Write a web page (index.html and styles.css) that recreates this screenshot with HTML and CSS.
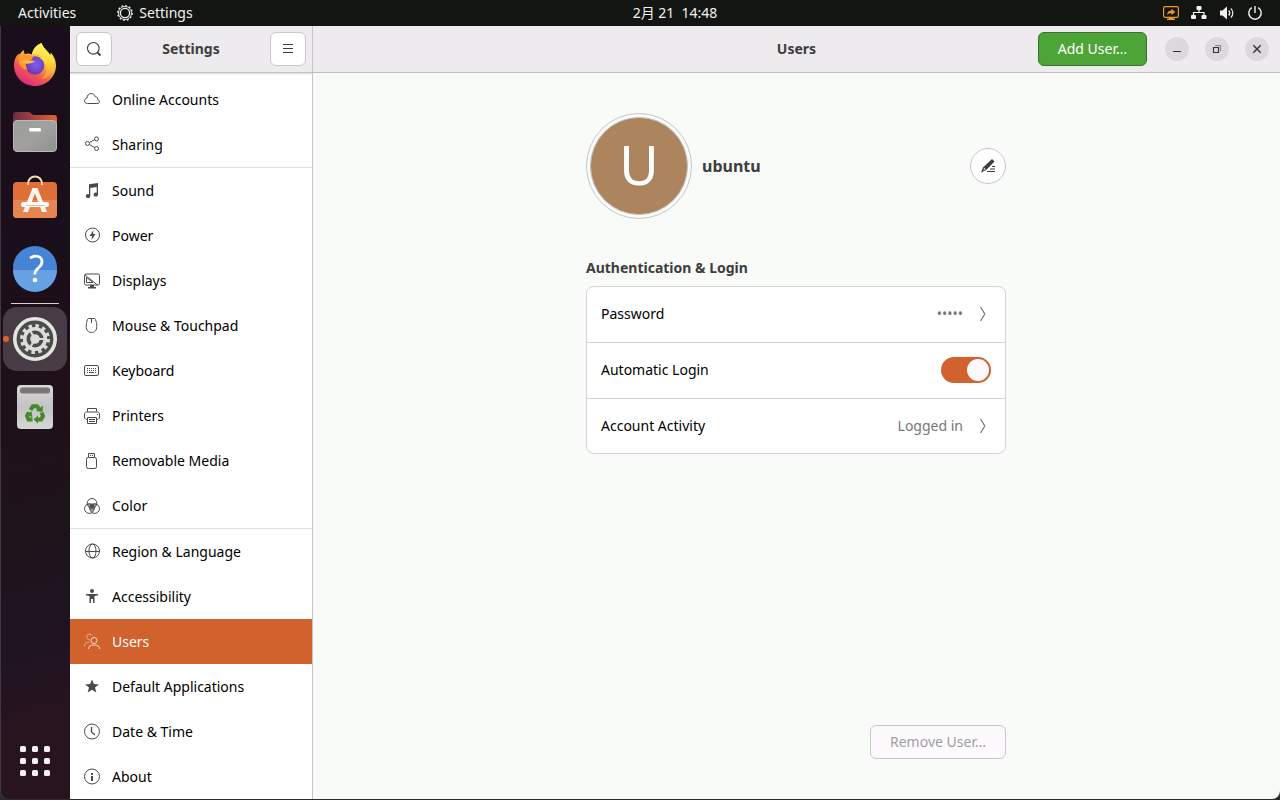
FILE: index.html
```html
<!DOCTYPE html>
<html lang="en">
<head>
<meta charset="utf-8">
<meta name="viewport" content="width=device-width, initial-scale=1">
<title>Settings</title>
<link rel="stylesheet" href="styles.css">
</head>
<body>
<div class="desktop">
  <header class="topbar">
    <div class="topbar-left">
      <button class="top-item" type="button">Activities</button>
      <button class="top-item" type="button">
        <svg class="icon" viewBox="0 0 16 16" aria-hidden="true"><circle cx="8" cy="8" r="7.300" fill="none" stroke="currentColor" stroke-width="1.200" stroke-dasharray="1.900 1.922"/><circle cx="8" cy="8" r="6.500" fill="none" stroke="currentColor" stroke-width=".9"/><circle cx="8" cy="8" r="4.600" fill="none" stroke="currentColor" stroke-width="1.300"/></svg>
        Settings
      </button>
    </div>
    <button class="top-item clock" type="button">2月 21&nbsp; 14:48</button>
    <div class="status">
      <svg class="icon share-screen" viewBox="0 0 16 16" aria-hidden="true"><rect x=".6" y="1.6" width="14.8" height="10.8" rx="1.6" fill="none" stroke="currentColor" stroke-width="1.2"/><path d="M6 12h4v1.5h2V15H4v-1.5h2z" fill="currentColor"/><path d="M4 10c.3-3 2-4.300 4.500-4.400V3.800L12.300 7 8.500 10.100V8.300C6.500 8.300 5 8.700 4 10z" fill="currentColor"/></svg>
      <svg class="icon" viewBox="0 0 16 16" aria-hidden="true"><rect x="5.500" y="1" width="5" height="4" rx="1" fill="currentColor"/><rect x="0" y="10" width="5" height="4" rx="1" fill="currentColor"/><rect x="10.500" y="10" width="5" height="4" rx="1" fill="currentColor"/><path d="M8 4v3.500M2.500 11V7.500H13V11" fill="none" stroke="currentColor" stroke-width="1.200"/></svg>
      <svg class="icon" viewBox="0 0 16 16" aria-hidden="true"><path d="M1 5.500h2.500L8 1.500v13L3.500 10.500H1z" fill="currentColor"/><path d="M9.700 5.500c1.300 1.500 1.300 3.500 0 5" fill="none" stroke="currentColor" stroke-width="1.300"/><path d="M11.800 3.300c2.700 2.700 2.700 6.700 0 9.400" fill="none" stroke="currentColor" stroke-width="1.200"/></svg>
      <svg class="icon" viewBox="0 0 16 16" aria-hidden="true"><path d="M8 1v7M4.800 2.700a6.200 6.200 0 1 0 6.400 0" fill="none" stroke="currentColor" stroke-width="1.400"/></svg>
    </div>
  </header>

  <div class="workspace">
    <nav class="dock" aria-label="Dock">
      <button class="app" type="button" aria-label="Firefox">
        <svg viewBox="0 0 44 44" aria-hidden="true">
          <defs>
            <linearGradient id="fox" x1=".8" y1=".1" x2=".3" y2="1"><stop offset="0" stop-color="#fff04e"/><stop offset=".4" stop-color="#ffac35"/><stop offset=".68" stop-color="#f65551"/><stop offset="1" stop-color="#d52a83"/></linearGradient>
            <radialGradient id="globe" cx=".55" cy=".45" r=".6"><stop offset="0" stop-color="#7c61ef"/><stop offset=".6" stop-color="#7646cb"/><stop offset="1" stop-color="#5b38a0"/></radialGradient>
            <linearGradient id="flame" x1="0" y1="0" x2="0" y2="1"><stop offset="0" stop-color="#fff267"/><stop offset=".5" stop-color="#ffdc3d"/><stop offset="1" stop-color="#ff963a"/></linearGradient>
          </defs>
          <path d="M28.500 1c1.500 5 6.500 8 9 12.500l.3-2.800C41 14 43 18.500 43 23.500 43 35 33.500 44 22 44S1 35 1 23.500C1 18 3 14 5.500 11.800l.3 2.400C7 11.500 8.700 9.500 10.500 8l1.200 4.200c2.800-.9 5-.8 7.300.2C20 7 23 3.500 28.500 1z" fill="url(#fox)"/>
          <circle cx="22" cy="23.500" r="9.300" fill="url(#globe)"/>
          <path d="M28.500 1c1.500 5 6.500 8 9 12.500l.3-2.800c3.500 5 4.800 12.800 1.200 19.300-2.500 4.600-6.800 7-11 6.800 6.500-4 7.500-11.300 2.500-17.800-1.400-2-3.400-3-3.400-3l3-.5c-3.300-3.300-7.600-4-11.100-3.100C20 7 23 3.500 28.500 1z" fill="url(#flame)"/>
          <path d="M5.500 12c3.500-.2 4.500 1.400 6.700 1.200 3.200-.3 5.800 0 7.800 2.300 0 1.800-5.300 4.700-8 5.500 1 2 .8 3 2.300 6.500C11 28 6 24 6.200 19.500z" fill="#ff9a30"/>
          <path d="M7.500 19.500c3-1.800 9.500-.5 14.300-.8-.5 1.900-4.800 2.800-7.800 3-2.500 0-4.500-1.700-6.500-2.200z" fill="#ffbd43"/>
        </svg>
      </button>
      <button class="app" type="button" aria-label="Files">
        <svg viewBox="0 0 44 44" aria-hidden="true">
          <defs><linearGradient id="folder"><stop stop-color="#6d294b"/><stop offset="1" stop-color="#e26132"/></linearGradient><linearGradient id="drawer" x2="1" y2="1"><stop stop-color="#9c9c9b"/><stop offset=".5" stop-color="#a1a1a0"/><stop offset="1" stop-color="#8f8f8e"/></linearGradient></defs>
          <path d="M0 5a3 3 0 0 1 3-3h13c2 0 2.500 3 5 3h20a3 3 0 0 1 3 3v10H0z" fill="url(#folder)"/>
          <rect x=".5" y="10.500" width="43" height="31" rx="3.500" fill="url(#drawer)" stroke="#b9b9b8"/>
          <rect x="16" y="18" width="12" height="3.500" rx="1.500" fill="#fff"/>
        </svg>
      </button>
      <button class="app" type="button" aria-label="Ubuntu Software">
        <svg viewBox="0 0 44 44" aria-hidden="true">
          <rect y="4" width="44" height="36" rx="4" fill="#df6e39"/><path d="M0 22h44v14a4 4 0 0 1-4 4H4a4 4 0 0 1-4-4z" fill="#e68552"/>
          <path d="M15 7V5.500a7 7 0 0 1 14 0V7" fill="none" stroke="#f4dda9" stroke-width="2"/>
          <path d="M19.500 10h5L34 34h-5L22 15.500 15 34h-5z" fill="#fff4ec"/><rect x="8" y="24" width="28" height="5" rx="2.500" fill="#fff"/><path d="M13 27.500h19" stroke="#f0b594" stroke-width="1"/>
        </svg>
      </button>
      <button class="app" type="button" aria-label="Help">
        <svg viewBox="0 0 44 44" aria-hidden="true"><circle cx="22" cy="22" r="22" fill="#4684d5"/><path d="M0 24h44a22 22 0 0 1-44 0z" fill="#66a2e3"/><path d="M17 12.200c6-4.200 12-1.500 12 3.600 0 6.400-7.200 5.500-7.200 12.700" fill="none" stroke="#fff" stroke-width="2.800"/><circle cx="22" cy="34" r="2.300" fill="#fff"/></svg>
      </button>
      <div class="dock-line"></div>
      <button class="app running" type="button" aria-label="Settings">
        <svg viewBox="0 0 44 44" aria-hidden="true">
          <circle cx="22" cy="22" r="20.200" fill="#4b4d49" stroke="#e4e4e3" stroke-width="3.600"/>
          <circle cx="22" cy="22" r="13" fill="none" stroke="#dcdcdb" stroke-width="4" stroke-dasharray="3.400 3.407"/>
          <circle cx="22" cy="22" r="10.300" fill="none" stroke="#dcdcdb" stroke-width="3.600"/>
          <path d="M22 22h11M22 22l-5.500-9.500M22 22l-5.500 9.500" stroke="#dcdcdb" stroke-width="2.200"/><circle cx="22" cy="22" r="4.800" fill="#dcdcdb"/>
        </svg>
      </button>
      <button class="app" type="button" aria-label="Trash">
        <svg viewBox="0 0 44 44" aria-hidden="true">
          <defs><linearGradient id="bin" x2="0" y2="1"><stop stop-color="#d7d7d7"/><stop offset=".5" stop-color="#c3c3c3"/><stop offset="1" stop-color="#d6d6d6"/></linearGradient></defs>
          <rect x="4" y="0" width="36" height="44" rx="4" fill="url(#bin)"/><rect x="7" y="2.500" width="30" height="6" rx="2.500" fill="#777577"/>
          <g fill="none" stroke="#45892d" stroke-width="4"><path d="M17.500 25l2.400-3.800h4.200l2.500 4"/><path d="M28.500 27.500l1.500 3.500-2 3.500h-4.500"/><path d="M19.500 34.500h-4L14 31l2-3.500"/></g>
          <g fill="#45892d"><path d="M23 26l6.500 1 .5-6.500z"/><path d="M25 30.500v8l-4.500-4z"/><path d="M12.500 28.500l6-2 1 6z"/></g>
        </svg>
      </button>
      <button class="app grid-button" type="button" aria-label="Show Applications">
        <svg viewBox="0 0 30 30" aria-hidden="true" fill="#f4f0f3"><rect width="6" height="6" rx="1.500"/><rect x="12" width="6" height="6" rx="1.500"/><rect x="24" width="6" height="6" rx="1.500"/><rect y="12" width="6" height="6" rx="1.500"/><rect x="12" y="12" width="6" height="6" rx="1.500"/><rect x="24" y="12" width="6" height="6" rx="1.500"/><rect y="24" width="6" height="6" rx="1.500"/><rect x="12" y="24" width="6" height="6" rx="1.500"/><rect x="24" y="24" width="6" height="6" rx="1.500"/></svg>
      </button>
    </nav>

    <div class="window">
      <aside class="sidebar">
        <div class="headerbar side-header">
          <button class="tool" type="button" aria-label="Search"><svg class="icon" viewBox="0 0 16 16" aria-hidden="true"><circle cx="7.300" cy="7.300" r="5.800" fill="none" stroke="currentColor" stroke-width="1.100"/><path d="M11.500 11.500l3 3" stroke="currentColor" stroke-width="1.800"/></svg></button>
          <h1 class="title">Settings</h1>
          <button class="tool" type="button" aria-label="Menu"><svg class="icon" viewBox="0 0 16 16" aria-hidden="true"><path d="M3 3.500h10M3 7.500h10M3 11.500h10" stroke="currentColor"/></svg></button>
        </div>
        <nav class="panels" aria-label="Settings panels">
          <div class="group">
            <a class="panel" href="#online"><svg class="icon" viewBox="0 0 16 16" aria-hidden="true"><path d="M3.500 11.500C1.500 11.500.5 10.300.5 8.800S1.600 6.300 3 6c0-2.600 1.700-4.500 4.200-4.500 2 0 3.500 1.200 4 3.200 2.300-.3 2.600 2 2.300 2.800 1.300.4 2 1 2 2s-.8 2-2.200 2z" fill="none" stroke="currentColor"/></svg>Online Accounts</a>
            <a class="panel" href="#sharing"><svg class="icon" viewBox="0 0 16 16" aria-hidden="true"><g fill="none" stroke="currentColor"><circle cx="3.500" cy="6.500" r="2"/><circle cx="12.500" cy="1.900" r="2"/><circle cx="12.500" cy="11.500" r="2"/><path d="M5.300 5.600l5.400-2.900M5.300 7.500l5.400 3"/></g></svg>Sharing</a>
          </div>
          <div class="group">
            <a class="panel" href="#sound"><svg class="icon" viewBox="0 0 16 16" aria-hidden="true"><path d="M5 1.200L14 0v11.500a2.200 2 0 1 1-1.300-1.700V4L6.300 5v8a2.200 2 0 1 1-1.300-1.700z" fill="currentColor"/></svg>Sound</a>
            <a class="panel" href="#power"><svg class="icon" viewBox="0 0 16 16" aria-hidden="true"><circle cx="8.500" cy="7" r="7" fill="none" stroke="currentColor"/><path d="M9.500 2L5.500 8H8L7.500 12l4-6H9z" fill="currentColor"/></svg>Power</a>
            <a class="panel" href="#displays"><svg class="icon" viewBox="0 0 16 16" aria-hidden="true"><rect x=".5" y="1" width="15" height="11" rx="1.500" fill="none" stroke="currentColor"/><path d="M1 2l12.500 10M2.500 4.500v5H9z" fill="none" stroke="currentColor"/><path d="M6 12h4v2h2v1.500H4V14h2z" fill="currentColor"/></svg>Displays</a>
            <a class="panel" href="#mouse"><svg class="icon" viewBox="0 0 16 16" aria-hidden="true"><path d="M4.500.5h6c1 0 2.300 4.200 2.300 8 0 3.700-2 6-5.300 6s-5.300-2.300-5.300-6c0-3.800 1.300-8 2.300-8zM7.500.5V5" fill="none" stroke="currentColor"/></svg>Mouse &amp; Touchpad</a>
            <a class="panel" href="#keyboard"><svg class="icon" viewBox="0 0 16 16" aria-hidden="true"><rect x=".5" y="2.500" width="14" height="10" rx="1.500" fill="none" stroke="currentColor"/><path d="M3 5.500h9.500M3 7.500h9.500" stroke="currentColor" stroke-dasharray="1 1"/><path d="M3 9.500h1M5 9.500h5M11 9.500h1" stroke="currentColor"/></svg>Keyboard</a>
            <a class="panel" href="#printers"><svg class="icon" viewBox="0 0 16 16" aria-hidden="true"><path d="M3.500 3.500v-3h9v3M3 11.500H2L.5 10V6c0-1 1-2 2-2h11c1 0 2 1 2 2v4L14 11.500h-1M3.500 9.500h9v6h-9zM5 11.500h6M5 13.500h6" fill="none" stroke="currentColor"/><path d="M13 6h1v1h-1z" fill="currentColor"/></svg>Printers</a>
            <a class="panel" href="#media"><svg class="icon" viewBox="0 0 16 16" aria-hidden="true"><rect x="2.500" y="4.500" width="10" height="11" rx="1.800" fill="none" stroke="currentColor"/><path d="M4.500 4V.5h6V4M6 2.500h1M8 2.500h1" fill="none" stroke="currentColor"/></svg>Removable Media</a>
            <a class="panel" href="#color"><svg class="icon" viewBox="0 0 16 16" aria-hidden="true"><path d="M3.500 5.500h9L11 11l-3 3-3-3z" fill="currentColor" opacity=".55"/><path d="M5.500 6.500h5L8 11z" fill="currentColor"/><g fill="none" stroke="currentColor"><circle cx="8" cy="5.300" r="4.800"/><circle cx="5.300" cy="10.600" r="4.800"/><circle cx="10.700" cy="10.600" r="4.800"/></g></svg>Color</a>
          </div>
          <div class="group">
            <a class="panel" href="#region"><svg class="icon" viewBox="0 0 16 16" aria-hidden="true"><g fill="none" stroke="currentColor"><circle cx="8.500" cy="7" r="7"/><ellipse cx="8.500" cy="7" rx="3.500" ry="7"/><path d="M1.500 7.500h14"/></g></svg>Region &amp; Language</a>
            <a class="panel" href="#accessibility"><svg class="icon" viewBox="0 0 16 16" aria-hidden="true"><circle cx="8" cy="2" r="2" fill="currentColor"/><path d="M2 5h12v1.200l-3.500.8V14H9v-4H7v4H5.500V7L2 6.200z" fill="currentColor"/></svg>Accessibility</a>
            <a class="panel selected" href="#users" aria-current="page"><svg class="icon" viewBox="0 0 16 16" aria-hidden="true"><g fill="none" stroke="currentColor" opacity=".75"><g opacity=".6"><path d="M6 5.800A2.900 2.900 0 1 1 8.300 1.800M.5 12.500c0-3 1.500-4.500 5-4.500"/></g><circle cx="10" cy="6.500" r="3"/><path d="M4.500 15c0-3 2-4 5.500-4s5.500 1 5.500 4"/></g></svg>Users</a>
            <a class="panel" href="#defaults"><svg class="icon" viewBox="0 0 16 16" aria-hidden="true"><path d="M8 .4l1.900 4.700 5 .3-3.900 3.200 1.300 4.900L8 10.800l-4.300 2.700L5 8.600 1.100 5.400l5-.3z" fill="currentColor"/></svg>Default Applications</a>
            <a class="panel" href="#date"><svg class="icon" viewBox="0 0 16 16" aria-hidden="true"><circle cx="8" cy="7.500" r="7.500" fill="none" stroke="currentColor"/><path d="M7.500 3v5l3.500 3" fill="none" stroke="currentColor" stroke-width="1.300"/></svg>Date &amp; Time</a>
            <a class="panel" href="#about"><svg class="icon" viewBox="0 0 16 16" aria-hidden="true"><circle cx="8" cy="7.500" r="7.500" fill="none" stroke="currentColor"/><path d="M7 4h2v2H7zM7 7h2v5H7z" fill="currentColor"/></svg>About</a>
          </div>
        </nav>
      </aside>

      <section class="content">
        <div class="headerbar main-header">
          <h2 class="title">Users</h2>
          <div class="actions">
            <button class="add" type="button">Add User…</button>
            <div class="controls">
              <button class="control" type="button" aria-label="Minimize"><svg class="icon" viewBox="0 0 16 16" aria-hidden="true"><path d="M4 10.500h8" stroke="currentColor"/></svg></button>
              <button class="control" type="button" aria-label="Restore"><svg class="icon" viewBox="0 0 16 16" aria-hidden="true"><path d="M4.500 6.500h5v5h-5z" fill="none" stroke="currentColor" stroke-width="1.200"/><path d="M6 4.500h5.500V10" fill="none" stroke="currentColor" opacity=".5"/></svg></button>
              <button class="control" type="button" aria-label="Close"><svg class="icon" viewBox="0 0 16 16" aria-hidden="true"><path d="M4.300 4.300l7.400 7.400M11.700 4.300l-7.400 7.400" stroke="currentColor" stroke-width="1.400"/></svg></button>
            </div>
          </div>
        </div>
        <main class="page">
          <div class="profile">
            <button class="avatar" type="button" aria-label="Change picture"><span class="avatar-face">U</span></button>
            <h3 class="username">ubuntu</h3>
            <button class="edit" type="button" aria-label="Edit name"><svg class="icon" viewBox="0 0 16 16" aria-hidden="true"><path d="M12 1l2.500 2.500L6 12.200 1 14.500l2-5z" fill="currentColor"/><path d="M4.200 9.500l1.800 1.800-2.700 1.400z" fill="#fff" opacity=".7"/><path d="M12 8.500h3M10 11h5M7 13.500h8" stroke="currentColor" stroke-width="1.200"/></svg></button>
          </div>
          <h3 class="section-title">Authentication &amp; Login</h3>
          <div class="card">
            <button class="row" type="button"><span>Password</span><span class="value">•••••</span><svg class="icon" viewBox="0 0 16 16" aria-hidden="true"><path d="M5.500 1l4.300 7-4.300 7" fill="none" stroke="currentColor" stroke-width="1.200"/></svg></button>
            <div class="row"><label for="auto-login">Automatic Login</label><input class="switch" id="auto-login" type="checkbox" role="switch" checked></div>
            <button class="row" type="button"><span>Account Activity</span><span class="value">Logged in</span><svg class="icon" viewBox="0 0 16 16" aria-hidden="true"><path d="M5.500 1l4.300 7-4.300 7" fill="none" stroke="currentColor" stroke-width="1.200"/></svg></button>
          </div>
          <button class="remove" type="button" disabled>Remove User…</button>
        </main>
      </section>
    </div>
  </div>
</div>
</body>
</html>
```

FILE: styles.css
```css
* { box-sizing: border-box; }

body {
  margin: 0;
  background: #2b2b2b;
  color: #000;
  font-family: "Noto Sans", "Noto Sans CJK SC", sans-serif;
  font-size: 14px;
  line-height: 20px;
}

h1, h2, h3 { margin: 0; font-size: 14px; color: #3d3d3d; }

button {
  padding: 0;
  border: 0;
  background: none;
  color: inherit;
  font: inherit;
}

a { color: inherit; text-decoration: none; }

.icon { display: block; flex: none; width: 16px; height: 16px; }

.desktop { display: flex; flex-direction: column; min-height: 100vh; }

/* Top bar */
.topbar {
  display: grid;
  grid-template-columns: 70px minmax(0, 1fr) auto minmax(0, 1fr);
  align-items: center;
  height: 26px;
  background: #131512;
  color: #f2f2f2;
}
.topbar-left { grid-column: 1 / 3; display: flex; gap: 41px; padding-left: 18px; }
.top-item { display: flex; align-items: center; gap: 6px; }
.status { display: flex; justify-content: flex-end; gap: 12px; padding-right: 17px; }
.share-screen { color: #eb9a29; }

.workspace { flex: 1; display: flex; padding-bottom: 1px; }

/* Dock */
.dock {
  display: flex;
  flex-direction: column;
  align-items: center;
  gap: 4px;
  width: 70px;
  padding: 6px 0;
  border-bottom-left-radius: 8px;
  box-shadow: inset 1px 0 #3c3a40;
  background: linear-gradient(165deg, #190e1a 0 25%, #201019 48%, #1e1318 62%, #1f1422 78%, #28141f 90%);
}
.app {
  position: relative;
  display: grid;
  place-items: center;
  width: 64px;
  height: 64px;
  border-radius: 14px;
}
.app svg { width: 44px; height: 44px; overflow: visible; }
.dock-line { width: 48px; height: 1px; margin: -1px 0; background: #d5d0d4; }
.running { background: rgba(255, 255, 255, 0.19); }
.running::before {
  content: "";
  position: absolute;
  left: 0;
  width: 6px;
  height: 6px;
  border-radius: 50%;
  background: #e0622c;
}
.grid-button { margin-top: auto; }
.grid-button svg { width: 30px; height: 30px; }

/* Window */
.window {
  flex: 1;
  display: flex;
  min-width: 0;
  overflow: hidden;
  border-bottom-right-radius: 8px;
  background: #f9fbf8;
}
.headerbar {
  height: 47px;
  border-bottom: 1px solid #c2c0c2;
  background: #edebed;
}
.title { text-align: center; }

.sidebar {
  display: flex;
  flex-direction: column;
  width: 243px;
  border-right: 1px solid #c6c4c6;
  background: #fff;
}
.side-header {
  display: flex;
  align-items: center;
  justify-content: space-between;
  padding: 0 6px;
}
.tool {
  display: grid;
  place-items: center;
  width: 36px;
  height: 34px;
  border: 1px solid #c9c7c9;
  border-radius: 6px;
  background: #fff;
  color: #3d3d3d;
}
.panels { padding-top: 4px; box-shadow: inset 0 2px 2px -1px #ddd; }
.group + .group { border-top: 1px solid #e0e0e0; }
.panel {
  display: flex;
  align-items: center;
  gap: 12px;
  height: 45px;
  padding: 0 14px;
}
.panel .icon { overflow: visible; color: #4a4a4a; }
.selected, .selected .icon { background: #d1622d; color: #fff; }

.content { flex: 1; display: flex; flex-direction: column; min-width: 0; }
.main-header {
  display: grid;
  grid-template-columns: minmax(0, 1fr) auto minmax(0, 1fr);
  align-items: center;
}
.main-header .title { grid-column: 2; }
.actions { display: flex; justify-content: flex-end; align-items: center; gap: 18px; padding-right: 11px; }
.add, .remove {
  height: 34px;
  padding: 0 19px;
  border: 1px solid #37752a;
  border-radius: 6px;
  background: #4ea537;
  color: #fff;
}
.controls { display: flex; gap: 16px; }
.control {
  display: grid;
  place-items: center;
  width: 24px;
  height: 24px;
  border-radius: 50%;
  background: #dbd9db;
  color: #333;
}

.page {
  flex: 1;
  display: flex;
  flex-direction: column;
  width: 100%;
  max-width: 421px;
  margin: 0 auto;
  padding: 40px 1px 40px 0;
}
.profile { display: flex; align-items: center; gap: 10px; }
.avatar {
  flex: none;
  width: 106px;
  height: 106px;
  padding: 3px;
  border: 1px solid #c9c6ca;
  border-radius: 50%;
}
.avatar-face {
  display: grid;
  place-items: center;
  height: 100%;
  padding-bottom: 4px;
  border: 1px solid #c3c0c2;
  border-radius: 50%;
  background: #ac855e;
  color: #fff;
  font-size: 54px;
  line-height: 54px;
}
.username { flex: 1; font-size: 16px; line-height: 24px; }
.edit {
  display: grid;
  place-items: center;
  width: 36px;
  height: 36px;
  border: 1px solid #c9c6ca;
  border-radius: 50%;
  background: #fff;
  color: #3d3d3d;
}
.section-title { margin: 39px 0 8px; }
.card {
  border: 1px solid #d4d4d4;
  border-radius: 8px;
  background: #fff;
}
.row {
  display: flex;
  align-items: center;
  gap: 12px;
  width: 100%;
  height: 55px;
  padding: 0 14px 1px;
  text-align: left;
}
.row + .row { height: 56px; border-top: 1px solid #d4d4d4; }
.row + .row:last-child { height: 55px; padding-bottom: 0; }
.row > :first-child { flex: 1; }
.value, .row .icon { color: #777; }

.switch {
  appearance: none;
  display: flex;
  justify-content: flex-end;
  width: 50px;
  height: 26px;
  margin: 0;
  padding: 2px;
  border-radius: 13px;
  background: #d1622d;
}
.switch::before {
  content: "";
  width: 22px;
  height: 22px;
  border-radius: 50%;
  background: #fcf9fd;
}
.switch:not(:checked) { justify-content: flex-start; background: #c4c2c4; }

.remove {
  align-self: flex-end;
  margin-top: auto;
  border-color: #c9c6ca;
  background: #fcfafd;
  color: #a0a0a0;
}
```
